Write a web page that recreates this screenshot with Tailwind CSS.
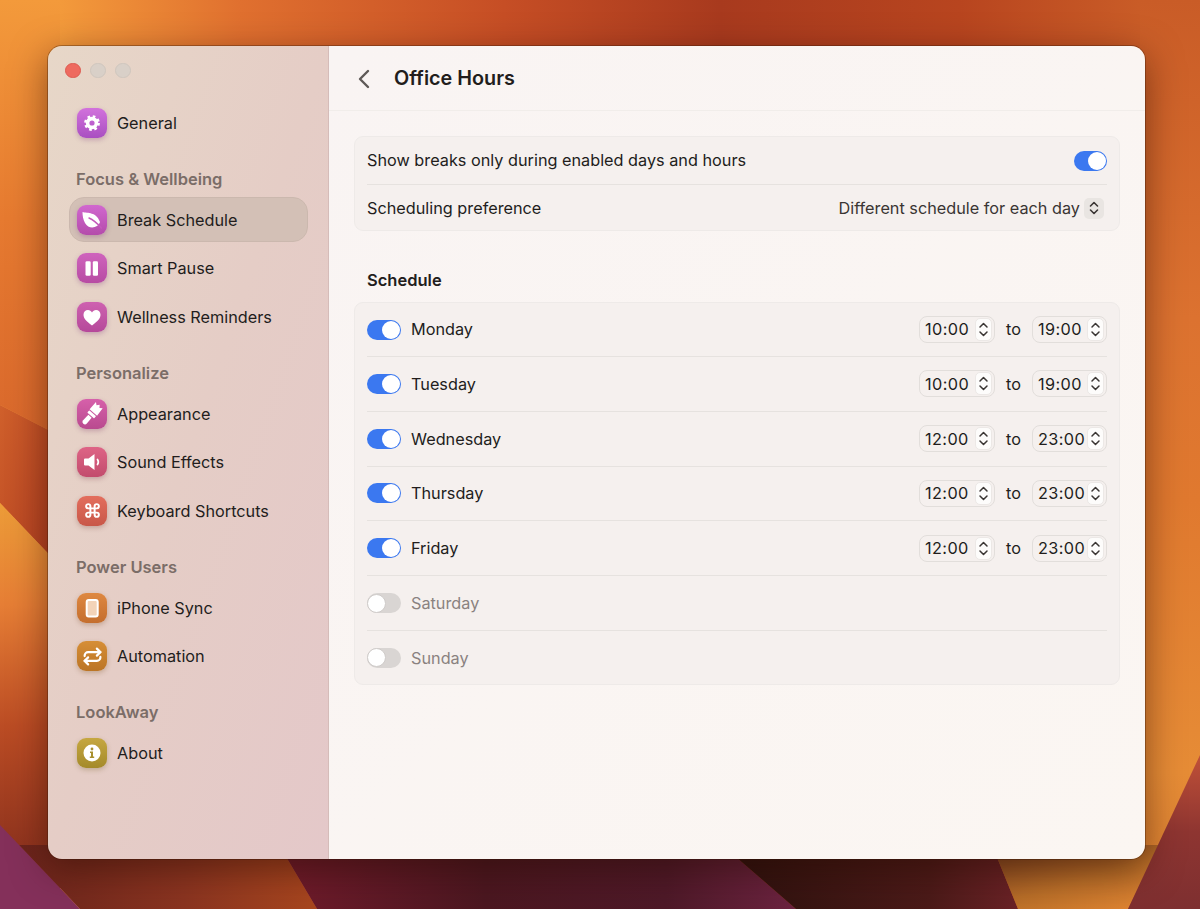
<!DOCTYPE html>
<html lang="en">
<head>
    <meta charset="UTF-8">
    <title>Office Hours</title>
    <script src="https://cdn.jsdelivr.net/npm/@tailwindcss/browser@4"></script>
</head>
<body class="relative w-[1200px] h-[909px] overflow-hidden font-['Inter',sans-serif] text-[16.25px] text-[#221d1c]">

    <!-- wallpaper -->
    <svg class="absolute inset-0" width="1200" height="909" viewBox="0 0 1200 909">
        <defs>
            <linearGradient id="top" x1="0" x2="1" y1="0" y2="0">
                <stop offset="0" stop-color="#f39a3b"/><stop offset="0.05" stop-color="#f39a3b"/><stop offset="0.2" stop-color="#e0702f"/><stop offset="0.42" stop-color="#c64e25"/><stop offset="0.6" stop-color="#a83a1e"/><stop offset="0.8" stop-color="#b8451f"/><stop offset="0.95" stop-color="#c95c27"/><stop offset="1" stop-color="#c95c27"/>
            </linearGradient>
            <linearGradient id="right" x1="0" x2="0" y1="0" y2="1">
                <stop offset="0" stop-color="#c95c27"/><stop offset="0.35" stop-color="#dc7230"/><stop offset="0.55" stop-color="#e0792f"/><stop offset="0.85" stop-color="#e68c36"/><stop offset="1" stop-color="#d97f30"/>
            </linearGradient>
            <linearGradient id="left1" x1="0" x2="0" y1="0" y2="1">
                <stop offset="0" stop-color="#f39a3b"/><stop offset="0.5" stop-color="#e67a30"/><stop offset="1" stop-color="#d9682c"/>
            </linearGradient>
            <linearGradient id="left2" x1="0" x2="1" y1="0" y2="1">
                <stop offset="0" stop-color="#d0602b"/><stop offset="1" stop-color="#b03c20"/>
            </linearGradient>
            <linearGradient id="left3" x1="0" x2="0" y1="0" y2="1">
                <stop offset="0" stop-color="#ec9c38"/><stop offset="0.25" stop-color="#e67e35"/><stop offset="0.55" stop-color="#bb4c24"/><stop offset="1" stop-color="#7a281b"/>
            </linearGradient>
            <linearGradient id="brown" x1="0" x2="1" y1="0" y2="0">
                <stop offset="0" stop-color="#6a241b"/><stop offset="0.55" stop-color="#8a3420"/><stop offset="1" stop-color="#a8461e"/>
            </linearGradient>
            <linearGradient id="maroon" x1="0" x2="1" y1="0" y2="0">
                <stop offset="0" stop-color="#701b2b"/><stop offset="0.4" stop-color="#4b1720"/><stop offset="0.75" stop-color="#4e1928"/><stop offset="1" stop-color="#6c2340"/>
            </linearGradient>
            <linearGradient id="dark" x1="0" x2="1" y1="0" y2="0">
                <stop offset="0" stop-color="#2c110d"/><stop offset="0.7" stop-color="#4b1a18"/><stop offset="1" stop-color="#6a2226"/>
            </linearGradient>
            <linearGradient id="amber" x1="0" x2="0.8" y1="0" y2="1">
                <stop offset="0" stop-color="#7a401f"/><stop offset="0.6" stop-color="#b86e28"/><stop offset="1" stop-color="#dc8231"/>
            </linearGradient>
            <linearGradient id="wedge" x1="0" x2="0" y1="0" y2="1">
                <stop offset="0" stop-color="#c05038"/><stop offset="0.5" stop-color="#8e3531"/><stop offset="1" stop-color="#7e2f30"/>
            </linearGradient>
        </defs>
        <rect width="1200" height="909" fill="url(#top)"/>
        <rect x="1140" y="0" width="60" height="909" fill="url(#right)"/>
        <polygon points="0,0 60,0 60,436 0,405" fill="url(#left1)"/>
        <polygon points="0,405 60,436 60,566 0,503" fill="url(#left2)"/>
        <polygon points="0,503 60,566 60,909 0,909" fill="url(#left3)"/>
        <polygon points="19,845 279,845 317,909 80,909" fill="url(#brown)"/>
        <polygon points="0,825 80,909 0,909" fill="#84305a"/>
        <polygon points="279,845 722,845 796,909 317,909" fill="url(#maroon)"/>
        <polygon points="722,845 992,845 1018,909 796,909" fill="url(#dark)"/>
        <polygon points="992,845 1160,845 1128,909 1018,909" fill="url(#amber)"/>
        <polygon points="1200,755 1200,909 1128,909" fill="url(#wedge)"/>
    </svg>

    <div class="absolute left-[48px] top-[46px] w-[1097px] h-[813px] rounded-[14px] overflow-hidden flex shadow-[0_10px_36px_rgba(40,10,0,0.5),0_0_0_1px_rgba(60,30,10,0.35)]">

        <!-- sidebar -->
        <aside class="w-[281px] shrink-0 border-r border-[#d5bcb9] bg-linear-to-br from-[#e7d7c8] via-[#e5cdc6] to-[#e4c8c9]">
            <div class="h-[48px] pl-[17px] pt-[16.5px] flex gap-[9.5px]">
                <span class="w-[15.5px] h-[15.5px] rounded-full bg-[#ee6a5f] border border-[#dd5a50]"></span>
                <span class="w-[15.5px] h-[15.5px] rounded-full bg-[#d9d0c8] border border-[#cfc6be]"></span>
                <span class="w-[15.5px] h-[15.5px] rounded-full bg-[#d9d0c8] border border-[#cfc6be]"></span>
            </div>
            <nav class="ml-[21px] w-[239px] pt-[4.5px]">
                <a class="h-[48.5px] pl-[8px] flex items-center gap-[10px]">
                    <span class="w-[30px] h-[30px] rounded-[9px] flex items-center justify-center bg-linear-to-b from-[#d272dc] to-[#a94fc1] shadow-[0_2px_5px_rgba(120,50,120,0.3)]">
                        <svg width="30" height="30" viewBox="0 0 30 30" fill="none" stroke="white"><circle cx="15" cy="15" r="4.4" stroke-width="3.6"/><circle cx="15" cy="15" r="6.4" stroke-width="3" stroke-dasharray="2.51 2.51"/></svg>
                    </span>
                    General
                </a>

                <h2 class="h-[48.5px] pl-[7px] pt-[21.5px] leading-[20px] text-[16.5px] font-semibold text-[#7b6d68]">Focus &amp; Wellbeing</h2>
                <div class="h-[48.5px] flex items-center">
                    <a class="w-full h-[45px] pl-[7px] flex items-center gap-[10px] rounded-[15px] bg-[#d3c0b6] border border-[#cbb8ae]">
                        <span class="w-[30px] h-[30px] rounded-[9px] flex items-center justify-center bg-linear-to-b from-[#d168cf] to-[#b44bab] shadow-[0_2px_5px_rgba(120,50,120,0.3)]">
                            <svg width="30" height="30" viewBox="0 0 30 30"><path d="M5.500 7C11 8.500 19 6.500 23 17C21 23 12 25 8 18C6 14 5.500 11 5.500 7Z" fill="white"/><path d="M12 13C15.500 14.500 20 18 24.500 23" fill="none" stroke="#c45abb" stroke-width="1.400" stroke-linecap="round"/></svg>
                        </span>
                        Break Schedule
                    </a>
                </div>
                <a class="h-[48.5px] pl-[8px] flex items-center gap-[10px]">
                    <span class="w-[30px] h-[30px] rounded-[9px] flex items-center justify-center bg-linear-to-b from-[#cf64bd] to-[#b74ba3] shadow-[0_2px_5px_rgba(120,50,120,0.3)]">
                        <svg width="30" height="30" viewBox="0 0 30 30" fill="white"><rect x="8.500" y="8.300" width="5.200" height="14.400" rx="1.300"/><rect x="15.800" y="8.300" width="5.200" height="14.400" rx="1.300"/></svg>
                    </span>
                    Smart Pause
                </a>
                <a class="h-[48.5px] pl-[8px] flex items-center gap-[10px]">
                    <span class="w-[30px] h-[30px] rounded-[9px] flex items-center justify-center bg-linear-to-b from-[#ce61b0] to-[#b5489a] shadow-[0_2px_5px_rgba(120,50,120,0.3)]">
                        <svg width="30" height="30" viewBox="0 0 30 30" fill="white"><path d="M15 23.500C9.500 19.500 6.500 16.500 6.500 12.800C6.500 10 8.500 8 11 8C12.700 8 14.200 8.900 15 10.400C15.800 8.900 17.300 8 19 8C21.500 8 23.500 10 23.500 12.800C23.500 16.500 20.500 19.500 15 23.500Z"/></svg>
                    </span>
                    Wellness Reminders
                </a>

                <h2 class="h-[48.5px] pl-[7px] pt-[21.5px] leading-[20px] text-[16.5px] font-semibold text-[#7b6d68]">Personalize</h2>
                <a class="h-[48.5px] pl-[8px] flex items-center gap-[10px]">
                    <span class="w-[30px] h-[30px] rounded-[9px] flex items-center justify-center bg-linear-to-b from-[#d660aa] to-[#b94a8f] shadow-[0_2px_5px_rgba(120,50,100,0.3)]">
                        <svg width="30" height="30" viewBox="0 0 30 30" fill="white"><g transform="rotate(42 15 15)"><path d="M10 3.500L12.500 5.500L14.500 3L16.500 5.500L19 3.500L20 13H10Z"/><rect x="10.500" y="14" width="9" height="3" rx="0.600"/><path d="M12.800 18H17.200L17.500 25.500A2.500 2.500 0 0 1 12.500 25.500Z"/></g></svg>
                    </span>
                    Appearance
                </a>
                <a class="h-[48.5px] pl-[8px] flex items-center gap-[10px]">
                    <span class="w-[30px] h-[30px] rounded-[9px] flex items-center justify-center bg-linear-to-b from-[#de6486] to-[#c24c6d] shadow-[0_2px_5px_rgba(120,50,70,0.3)]">
                        <svg width="30" height="30" viewBox="0 0 30 30"><path d="M8 11.500H11.500L17.500 7V23L11.500 18.500H8A1 1 0 0 1 7 17.500V12.500A1 1 0 0 1 8 11.500Z" fill="white"/><path d="M20.500 12.500A4.500 4.500 0 0 1 20.500 17.500" fill="none" stroke="white" stroke-width="1.700" stroke-linecap="round"/></svg>
                    </span>
                    Sound Effects
                </a>
                <a class="h-[48.5px] pl-[8px] flex items-center gap-[10px]">
                    <span class="w-[30px] h-[30px] rounded-[9px] flex items-center justify-center bg-linear-to-b from-[#e36e5d] to-[#c85748] shadow-[0_2px_5px_rgba(120,60,50,0.3)]">
                        <svg width="17" height="17" viewBox="0 0 24 24" fill="none" stroke="white" stroke-width="2.800"><path d="M15 6v12a3 3 0 1 0 3-3H6a3 3 0 1 0 3 3V6a3 3 0 1 0-3 3h12a3 3 0 1 0-3-3"/></svg>
                    </span>
                    Keyboard Shortcuts
                </a>

                <h2 class="h-[48.5px] pl-[7px] pt-[21.5px] leading-[20px] text-[16.5px] font-semibold text-[#7b6d68]">Power Users</h2>
                <a class="h-[48.5px] pl-[8px] flex items-center gap-[10px]">
                    <span class="w-[30px] h-[30px] rounded-[9px] flex items-center justify-center bg-linear-to-b from-[#de8841] to-[#c46e2e] shadow-[0_2px_5px_rgba(120,70,30,0.3)]">
                        <svg width="30" height="30" viewBox="0 0 30 30"><rect x="9.700" y="7" width="11" height="16.500" rx="2" fill="#f3d3b8" stroke="white" stroke-width="2"/></svg>
                    </span>
                    iPhone Sync
                </a>
                <a class="h-[48.5px] pl-[8px] flex items-center gap-[10px]">
                    <span class="w-[30px] h-[30px] rounded-[9px] flex items-center justify-center bg-linear-to-b from-[#d68e36] to-[#bb7526] shadow-[0_2px_5px_rgba(120,80,30,0.3)]">
                        <svg width="21" height="21" viewBox="0 0 24 24" fill="none" stroke="white" stroke-width="2.500" stroke-linecap="round" stroke-linejoin="round"><path d="m17 3 4 4-4 4"/><path d="M3 11.500v-.5a4 4 0 0 1 4-4h14"/><path d="m7 21-4-4 4-4"/><path d="M21 12.500v.5a4 4 0 0 1-4 4H3"/></svg>
                    </span>
                    Automation
                </a>

                <h2 class="h-[48.5px] pl-[7px] pt-[21.5px] leading-[20px] text-[16.5px] font-semibold text-[#7b6d68]">LookAway</h2>
                <a class="h-[48.5px] pl-[8px] flex items-center gap-[10px]">
                    <span class="w-[30px] h-[30px] rounded-[9px] flex items-center justify-center bg-linear-to-b from-[#c6a741] to-[#a48a2a] shadow-[0_2px_5px_rgba(110,90,30,0.3)]">
                        <svg width="30" height="30" viewBox="0 0 30 30"><circle cx="15" cy="15" r="8.500" fill="white"/><g fill="#a88f2e"><circle cx="15" cy="11" r="1.400"/><path d="M13 13.500H16V18.500H17.200V20H12.800V18.500H14V15H13Z"/></g></svg>
                    </span>
                    About
                </a>
            </nav>
        </aside>

        <!-- main -->
        <main class="flex-1 bg-linear-to-br from-[#f9f4f3] to-[#fbf6f2]">
            <header class="h-[65px] border-b border-[#f1edea] flex items-center pl-[28px] pt-[1px]">
                <svg width="13" height="20" viewBox="0 0 13 20" fill="none" stroke="#5e5957" stroke-width="2.400" stroke-linecap="round" stroke-linejoin="round"><path d="M11 2L3 10L11 18"/></svg>
                <h1 class="ml-[24px] text-[19.8px] font-semibold">Office Hours</h1>
            </header>

            <div class="px-[25px] pt-[25px]">
                <section class="h-[95px] rounded-[9px] border border-[#eeeae8] bg-[#f5f0ee] px-[12px]">
                    <div class="h-[48px] flex items-center justify-between border-b border-[#e6e2df]">
                        Show breaks only during enabled days and hours
                        <span class="w-[33px] h-[20px] rounded-full bg-[#3b78f0] flex justify-end items-center pr-[1px]"><span class="w-[18px] h-[18px] rounded-full bg-white"></span></span>
                    </div>
                    <div class="h-[46px] flex items-center justify-between pr-[3px]">
                        Scheduling preference
                        <span class="flex items-center gap-[4px] text-[#3a3533]">
                            Different schedule for each day
                            <span class="w-[20px] h-[21px] rounded-[5px] bg-[#e9e5e2] flex items-center justify-center">
                                <svg width="12" height="16" viewBox="0 0 12 16" fill="none" stroke="#3a3533" stroke-width="1.600" stroke-linecap="round" stroke-linejoin="round"><path d="M2.500 6L6 2.500L9.500 6M2.500 10L6 13.500L9.500 10"/></svg>
                            </span>
                        </span>
                    </div>
                </section>

                <h2 class="mt-[39px] h-[21px] leading-[21px] pl-[13px] text-[16.5px] font-semibold">Schedule</h2>

                <section class="mt-[11px] h-[383px] rounded-[9px] border border-[#eeeae8] bg-[#f5f0ee] px-[12px]">
                    <div class="h-[54px] flex items-center border-b border-[#e6e2df]">
                        <span class="w-[34px] h-[20px] rounded-full bg-[#3b78f0] flex justify-end items-center pr-[1px]"><span class="w-[18px] h-[18px] rounded-full bg-white"></span></span>
                        <span class="ml-[10px]">Monday</span>
                        <div class="ml-auto flex items-center">
                            <span class="w-[76px] h-[27px] rounded-[8px] border border-[#e2dedb] flex items-center justify-between pl-[5px] pr-[2px] tracking-[0.4px]">10:00<span class="w-[17px] h-[23px] rounded-[5px] bg-[#fdfcfb] border border-[#ece8e6] flex items-center justify-center"><svg width="11" height="19" viewBox="0 0 11 19" fill="none" stroke="#3a3533" stroke-width="1.500" stroke-linecap="round" stroke-linejoin="round"><path d="M2 7L5.500 3.500L9 7M2 12L5.500 15.500L9 12"/></svg></span></span>
                            <span class="w-[37px] text-center">to</span>
                            <span class="w-[75px] h-[27px] rounded-[8px] border border-[#e2dedb] flex items-center justify-between pl-[5px] pr-[2px] tracking-[0.4px]">19:00<span class="w-[17px] h-[23px] rounded-[5px] bg-[#fdfcfb] border border-[#ece8e6] flex items-center justify-center"><svg width="11" height="19" viewBox="0 0 11 19" fill="none" stroke="#3a3533" stroke-width="1.500" stroke-linecap="round" stroke-linejoin="round"><path d="M2 7L5.500 3.500L9 7M2 12L5.500 15.500L9 12"/></svg></span></span>
                        </div>
                    </div>
                    <div class="h-[54.8px] flex items-center border-b border-[#e6e2df]">
                        <span class="w-[34px] h-[20px] rounded-full bg-[#3b78f0] flex justify-end items-center pr-[1px]"><span class="w-[18px] h-[18px] rounded-full bg-white"></span></span>
                        <span class="ml-[10px]">Tuesday</span>
                        <div class="ml-auto flex items-center">
                            <span class="w-[76px] h-[27px] rounded-[8px] border border-[#e2dedb] flex items-center justify-between pl-[5px] pr-[2px] tracking-[0.4px]">10:00<span class="w-[17px] h-[23px] rounded-[5px] bg-[#fdfcfb] border border-[#ece8e6] flex items-center justify-center"><svg width="11" height="19" viewBox="0 0 11 19" fill="none" stroke="#3a3533" stroke-width="1.500" stroke-linecap="round" stroke-linejoin="round"><path d="M2 7L5.500 3.500L9 7M2 12L5.500 15.500L9 12"/></svg></span></span>
                            <span class="w-[37px] text-center">to</span>
                            <span class="w-[75px] h-[27px] rounded-[8px] border border-[#e2dedb] flex items-center justify-between pl-[5px] pr-[2px] tracking-[0.4px]">19:00<span class="w-[17px] h-[23px] rounded-[5px] bg-[#fdfcfb] border border-[#ece8e6] flex items-center justify-center"><svg width="11" height="19" viewBox="0 0 11 19" fill="none" stroke="#3a3533" stroke-width="1.500" stroke-linecap="round" stroke-linejoin="round"><path d="M2 7L5.500 3.500L9 7M2 12L5.500 15.500L9 12"/></svg></span></span>
                        </div>
                    </div>
                    <div class="h-[54.8px] flex items-center border-b border-[#e6e2df]">
                        <span class="w-[34px] h-[20px] rounded-full bg-[#3b78f0] flex justify-end items-center pr-[1px]"><span class="w-[18px] h-[18px] rounded-full bg-white"></span></span>
                        <span class="ml-[10px]">Wednesday</span>
                        <div class="ml-auto flex items-center">
                            <span class="w-[76px] h-[27px] rounded-[8px] border border-[#e2dedb] flex items-center justify-between pl-[5px] pr-[2px] tracking-[0.4px]">12:00<span class="w-[17px] h-[23px] rounded-[5px] bg-[#fdfcfb] border border-[#ece8e6] flex items-center justify-center"><svg width="11" height="19" viewBox="0 0 11 19" fill="none" stroke="#3a3533" stroke-width="1.500" stroke-linecap="round" stroke-linejoin="round"><path d="M2 7L5.500 3.500L9 7M2 12L5.500 15.500L9 12"/></svg></span></span>
                            <span class="w-[37px] text-center">to</span>
                            <span class="w-[75px] h-[27px] rounded-[8px] border border-[#e2dedb] flex items-center justify-between pl-[5px] pr-[2px] tracking-[0.4px]">23:00<span class="w-[17px] h-[23px] rounded-[5px] bg-[#fdfcfb] border border-[#ece8e6] flex items-center justify-center"><svg width="11" height="19" viewBox="0 0 11 19" fill="none" stroke="#3a3533" stroke-width="1.500" stroke-linecap="round" stroke-linejoin="round"><path d="M2 7L5.500 3.500L9 7M2 12L5.500 15.500L9 12"/></svg></span></span>
                        </div>
                    </div>
                    <div class="h-[54.8px] flex items-center border-b border-[#e6e2df]">
                        <span class="w-[34px] h-[20px] rounded-full bg-[#3b78f0] flex justify-end items-center pr-[1px]"><span class="w-[18px] h-[18px] rounded-full bg-white"></span></span>
                        <span class="ml-[10px]">Thursday</span>
                        <div class="ml-auto flex items-center">
                            <span class="w-[76px] h-[27px] rounded-[8px] border border-[#e2dedb] flex items-center justify-between pl-[5px] pr-[2px] tracking-[0.4px]">12:00<span class="w-[17px] h-[23px] rounded-[5px] bg-[#fdfcfb] border border-[#ece8e6] flex items-center justify-center"><svg width="11" height="19" viewBox="0 0 11 19" fill="none" stroke="#3a3533" stroke-width="1.500" stroke-linecap="round" stroke-linejoin="round"><path d="M2 7L5.500 3.500L9 7M2 12L5.500 15.500L9 12"/></svg></span></span>
                            <span class="w-[37px] text-center">to</span>
                            <span class="w-[75px] h-[27px] rounded-[8px] border border-[#e2dedb] flex items-center justify-between pl-[5px] pr-[2px] tracking-[0.4px]">23:00<span class="w-[17px] h-[23px] rounded-[5px] bg-[#fdfcfb] border border-[#ece8e6] flex items-center justify-center"><svg width="11" height="19" viewBox="0 0 11 19" fill="none" stroke="#3a3533" stroke-width="1.500" stroke-linecap="round" stroke-linejoin="round"><path d="M2 7L5.500 3.500L9 7M2 12L5.500 15.500L9 12"/></svg></span></span>
                        </div>
                    </div>
                    <div class="h-[54.8px] flex items-center border-b border-[#e6e2df]">
                        <span class="w-[34px] h-[20px] rounded-full bg-[#3b78f0] flex justify-end items-center pr-[1px]"><span class="w-[18px] h-[18px] rounded-full bg-white"></span></span>
                        <span class="ml-[10px]">Friday</span>
                        <div class="ml-auto flex items-center">
                            <span class="w-[76px] h-[27px] rounded-[8px] border border-[#e2dedb] flex items-center justify-between pl-[5px] pr-[2px] tracking-[0.4px]">12:00<span class="w-[17px] h-[23px] rounded-[5px] bg-[#fdfcfb] border border-[#ece8e6] flex items-center justify-center"><svg width="11" height="19" viewBox="0 0 11 19" fill="none" stroke="#3a3533" stroke-width="1.500" stroke-linecap="round" stroke-linejoin="round"><path d="M2 7L5.500 3.500L9 7M2 12L5.500 15.500L9 12"/></svg></span></span>
                            <span class="w-[37px] text-center">to</span>
                            <span class="w-[75px] h-[27px] rounded-[8px] border border-[#e2dedb] flex items-center justify-between pl-[5px] pr-[2px] tracking-[0.4px]">23:00<span class="w-[17px] h-[23px] rounded-[5px] bg-[#fdfcfb] border border-[#ece8e6] flex items-center justify-center"><svg width="11" height="19" viewBox="0 0 11 19" fill="none" stroke="#3a3533" stroke-width="1.500" stroke-linecap="round" stroke-linejoin="round"><path d="M2 7L5.500 3.500L9 7M2 12L5.500 15.500L9 12"/></svg></span></span>
                        </div>
                    </div>
                    <div class="h-[54.8px] flex items-center border-b border-[#e6e2df]">
                        <span class="w-[34px] h-[20px] rounded-full bg-[#d9d5d3] flex items-center"><span class="w-[19px] h-[19px] rounded-full bg-white border border-[#cfcbc9]"></span></span>
                        <span class="ml-[10px] text-[#8a8280]">Saturday</span>
                    </div>
                    <div class="h-[54px] flex items-center">
                        <span class="w-[34px] h-[20px] rounded-full bg-[#d9d5d3] flex items-center"><span class="w-[19px] h-[19px] rounded-full bg-white border border-[#cfcbc9]"></span></span>
                        <span class="ml-[10px] text-[#8a8280]">Sunday</span>
                    </div>
                </section>
            </div>
        </main>
    </div>
</body>
</html>
